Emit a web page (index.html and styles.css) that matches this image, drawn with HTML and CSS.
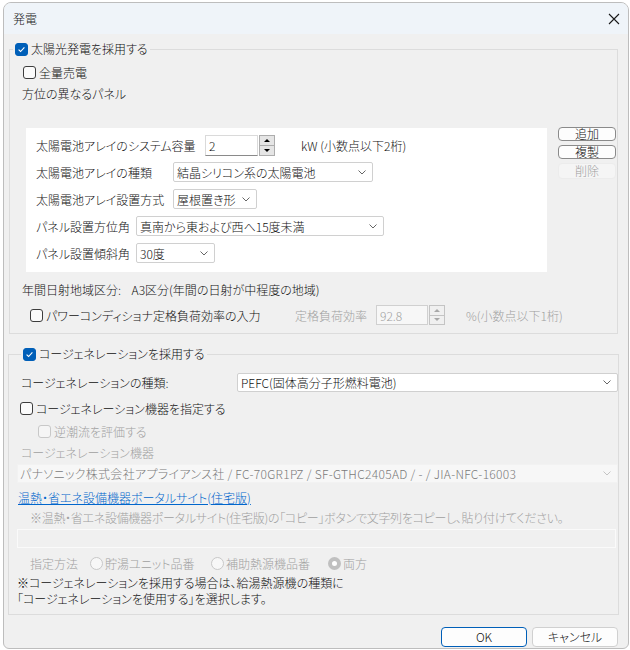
FILE: index.html
```html
<!DOCTYPE html>
<html lang="ja">
<head>
<meta charset="utf-8">
<title>発電</title>
<link rel="stylesheet" href="styles.css">
</head>
<body>
<div class="window">
  <div class="titlebar">
    <span class="title">発電</span>
    <svg class="close" width="12" height="12" viewBox="0 0 12 12"><path d="M1 1L11 11M11 1L1 11" stroke="#1a1a1a" stroke-width="1.1" fill="none"/></svg>
  </div>
  <div class="body">
    <fieldset class="group group1">
      <legend><span class="leg"><span class="cb on"><svg width="11" height="11" viewBox="0 0 11 11"><path d="M2.6 5.6L4.6 7.5L8.4 3.4" stroke="#fff" stroke-width="1.1" fill="none"/></svg></span>太陽光発電を採用する</span></legend>
      <div class="row pl13 mt5"><span class="cb"></span>全量売電</div>
      <div class="row pl12 mt1">方位の異なるパネル</div>
      <div class="panelrow">
        <div class="panel">
          <div class="prow"><span class="lab-a">太陽電池アレイのシステム容量</span><span class="num">2</span><span class="spin"><span class="sb"><i class="up"></i></span><span class="sb"><i class="dn"></i></span></span><span class="unit">kW (小数点以下2桁)</span></div>
          <div class="prow"><span class="lab-b">太陽電池アレイの種類</span><span class="combo w200"><span>結晶シリコン系の太陽電池</span><svg width="8" height="5" viewBox="0 0 8 5"><path d="M0.5 0.5L4 4L7.5 0.5" stroke="#666" fill="none"/></svg></span></div>
          <div class="prow"><span class="lab-b">太陽電池アレイ設置方式</span><span class="combo w84"><span>屋根置き形</span><svg width="8" height="5" viewBox="0 0 8 5"><path d="M0.5 0.5L4 4L7.5 0.5" stroke="#666" fill="none"/></svg></span></div>
          <div class="prow"><span class="lab-c">パネル設置方位角</span><span class="combo w248"><span>真南から東および西へ15度未満</span><svg width="8" height="5" viewBox="0 0 8 5"><path d="M0.5 0.5L4 4L7.5 0.5" stroke="#666" fill="none"/></svg></span></div>
          <div class="prow"><span class="lab-c">パネル設置傾斜角</span><span class="combo w79"><span>30度</span><svg width="8" height="5" viewBox="0 0 8 5"><path d="M0.5 0.5L4 4L7.5 0.5" stroke="#666" fill="none"/></svg></span></div>
        </div>
        <div class="sidebtns">
          <span class="sbtn h14">追加</span>
          <span class="sbtn h14">複製</span>
          <span class="sbtn dis h16">削除</span>
        </div>
      </div>
      <div class="row pl12 mt7">年間日射地域区分:&nbsp;&nbsp;&nbsp;&nbsp;A3区分(年間の日射が中程度の地域)</div>
      <div class="row pl20 mt5 h22">
        <span class="pclab"><span class="cb"></span>パワーコンディショナ定格負荷効率の入力</span>
        <span class="effl gray">定格負荷効率</span>
        <span class="num dis">92.8</span><span class="spin dis"><span class="sb"><i class="up"></i></span><span class="sb"><i class="dn"></i></span></span>
        <span class="unit2 gray">%(小数点以下1桁)</span>
      </div>
    </fieldset>

    <fieldset class="group group2">
      <legend><span class="leg"><span class="cb on"><svg width="11" height="11" viewBox="0 0 11 11"><path d="M2.6 5.6L4.6 7.5L8.4 3.4" stroke="#fff" stroke-width="1.1" fill="none"/></svg></span>コージェネレーションを採用する</span></legend>
      <div class="row pl12 mt10"><span class="cglab">コージェネレーションの種類:</span><span class="combo cgcombo"><span>PEFC(固体高分子形燃料電池)</span><svg width="8" height="5" viewBox="0 0 8 5"><path d="M0.5 0.5L4 4L7.5 0.5" stroke="#666" fill="none"/></svg></span></div>
      <div class="row pl11 mt6"><span class="cb"></span>コージェネレーション機器を指定する</div>
      <div class="row pl29 mt3"><span class="cb dis"></span><span class="gray">逆潮流を評価する</span></div>
      <div class="row pl12 mt1 gray">コージェネレーション機器</div>
      <div class="dcombo"><span>パナソニック株式会社アプライアンス社 / FC-70GR1PZ / SF-GTHC2405AD / - / JIA-NFC-16003</span><svg width="8" height="5" viewBox="0 0 8 5"><path d="M0.5 0.5L4 4L7.5 0.5" stroke="#c4c4c4" fill="none"/></svg></div>
      <div class="row pl9 mt4"><span class="link">温熱・省エネ設備機器ポータルサイト(住宅版)</span></div>
      <div class="row pl21 gray tight">※温熱・省エネ設備機器ポータルサイト(住宅版)の「コピー」ボタンで文字列をコピーし、貼り付けてください。</div>
      <div class="tbox"></div>
      <div class="row pl21 mt5 gray">
        <span class="methl">指定方法</span>
        <span class="ropt w121"><span class="rd"></span>貯湯ユニット品番</span>
        <span class="ropt w117"><span class="rd"></span>補助熱源機品番</span>
        <span class="ropt"><span class="rd on"></span>両方</span>
      </div>
      <div class="notes">※コージェネレーションを採用する場合は、給湯熱源機の種類に<br>「コージェネレーションを使用する」を選択します。</div>
    </fieldset>

    <div class="footer">
      <span class="btn def">OK</span>
      <span class="btn">キャンセル</span>
    </div>
  </div>
</div>
</body>
</html>
```

FILE: styles.css
```css
* { box-sizing: border-box; }
html, body { margin: 0; background: #ffffff; }
body {
  font-family: "Noto Sans CJK JP", "Noto Sans", sans-serif;
  font-size: 12px;
  font-weight: 300;
  color: #111;
  font-feature-settings: "palt";
}
.window {
  margin: 2px 0 0 3px;
  width: 626px;
  height: 647px;
  border: 1px solid #bdbdbd;
  border-radius: 8px 8px 6px 6px;
  background: #f0f0f0;
  overflow: hidden;
  display: flex;
  flex-direction: column;
}
.titlebar {
  height: 31px;
  flex: none;
  background: #eff4f9;
  display: flex;
  align-items: center;
  justify-content: space-between;
  padding: 0 8px 0 9px;
}
.title { font-size: 12px; color: #1a1a1a; }
.body { padding-top: 7px; }

.group {
  margin: 0;
  padding: 0;
  border: 1px solid #dcdcdc;
  min-width: 0;
}
legend { padding: 0 2px; height: 16px; }
.leg { display: flex; align-items: center; height: 16px; line-height: 16px; }
.group1 { margin-left: 5px; width: 609px; padding-bottom: 7px; }
.group1 legend { margin-left: 3px; }
.group2 { margin: 12px 0 0 4px; width: 611px; padding-bottom: 7px; }
.group2 legend { margin-left: 12px; }

.row { display: flex; align-items: center; height: 20px; white-space: nowrap; }
.h22 { height: 22px; }
.pl9 { padding-left: 9px; }
.pl11 { padding-left: 11px; }
.pl12 { padding-left: 12px; }
.pl13 { padding-left: 13px; }
.pl20 { padding-left: 20px; }
.pl21 { padding-left: 21px; }
.pl29 { padding-left: 29px; }
.mt1 { margin-top: 1px; }
.mt3 { margin-top: 3px; }
.mt4 { margin-top: 4px; }
.mt5 { margin-top: 5px; }
.mt6 { margin-top: 6px; }
.mt7 { margin-top: 7px; }
.mt10 { margin-top: 10px; }
.gray { color: #a0a0a0; }
.tight { letter-spacing: -0.3px; }

.cb {
  width: 13px; height: 13px; flex: none;
  border: 1px solid #3d3d3d;
  border-radius: 3px;
  background: #fbfbfb;
  margin-right: 3px;
  display: inline-flex; align-items: center; justify-content: center;
}
.cb.on { background: #005fb8; border-color: #005fb8; }
.cb.dis { border-color: #c8c8c8; background: #f5f5f5; }

.panelrow { display: flex; margin-top: 24px; height: 145px; }
.panel {
  margin: 1px 0 0 16px;
  width: 521px; height: 144px;
  background: #fff;
  padding: 6px 0 0 10px;
  display: flex; flex-direction: column; gap: 5px;
}
.prow { display: flex; align-items: center; height: 22px; white-space: nowrap; }
.lab-a { width: 169px; flex: none; }
.lab-b { width: 137px; flex: none; }
.lab-c { width: 100px; flex: none; }
.num {
  width: 53px; height: 21px; flex: none;
  border: 1px solid #dadada; border-bottom-color: #8a8a8a;
  background: #fff;
  padding: 0 0 0 3px;
  line-height: 19px;
}
.spin { width: 16px; height: 21px; flex: none; display: flex; flex-direction: column; margin-left: 1px; }
.sb {
  flex: 1; border: 1px solid #adadad; background: #e5e5e5;
  display: flex; align-items: center; justify-content: center;
}
.sb + .sb { border-top: none; }
.up { width: 0; height: 0; border-left: 3px solid transparent; border-right: 3px solid transparent; border-bottom: 3px solid #000; }
.dn { width: 0; height: 0; border-left: 3px solid transparent; border-right: 3px solid transparent; border-top: 3px solid #000; }
.spin.dis .sb { background: #f0f0f0; border-color: #c4c4c4; }
.spin.dis .up { border-bottom-color: #a8a8a8; }
.spin.dis .dn { border-top-color: #a8a8a8; }
.num.dis { background: #f7f7f7; border-color: #d0d0d0; color: #a0a0a0; width: 52px; height: 20px; }
.spin.dis { height: 20px; }
.unit { margin-left: 26px; }

.combo {
  height: 20px; flex: none;
  border: 1px solid #d0d0d0;
  border-radius: 2px;
  background: #fff;
  display: flex; align-items: center; justify-content: space-between;
  padding: 0 6px 0 3px;
  overflow: hidden;
}
.w200 { width: 200px; }
.w84 { width: 84px; }
.w248 { width: 248px; }
.w79 { width: 79px; }

.sidebtns { display: flex; flex-direction: column; gap: 4px; margin-left: 11px; width: 58px; }
.sbtn {
  display: block;
  border: 1px solid #8a8a8a; border-radius: 4px;
  background: #fdfdfd;
  text-align: center; font-size: 12px; line-height: 12px;
}
.sbtn.h14 { height: 14px; }
.sbtn.h16 { height: 16px; line-height: 14px; }
.sbtn.dis { border-color: #ececec; background: #f5f5f5; color: #a0a0a0; }

.pclab { width: 265px; flex: none; display: flex; align-items: center; }
.effl { width: 81px; flex: none; }
.unit2 { margin-left: 21px; }

.cglab { width: 216px; flex: none; }
.cgcombo { width: 381px; height: 19px; }
.dcombo {
  margin: 2px 0 0 8px;
  width: 601px; height: 19px;
  background: #f7f7f7;
  border: 1px solid #f2f2f2;
  display: flex; align-items: center; justify-content: space-between;
  padding: 0 6px 0 2px;
  color: #7a7a7a;
  white-space: nowrap;
  letter-spacing: 0.3px;
}
.link { color: #0066cc; text-decoration: underline; }
.tbox {
  margin: 2px 0 0 8px;
  width: 599px; height: 19px;
  border: 1px solid #fafafa;
  background: #f0f0f0;
}
.methl { width: 60px; flex: none; }
.ropt { display: flex; align-items: center; flex: none; }
.w121 { width: 121px; }
.w117 { width: 117px; }
.rd {
  width: 13px; height: 13px; flex: none;
  border: 1px solid #c8c8c8; border-radius: 50%;
  background: #f7f7f7;
  margin-right: 2px;
}
.rd.on { border: 4px solid #c0c0c0; background: #fff; }
.notes { margin-top: 2px; padding-left: 8px; line-height: 16px; }

.footer { display: flex; justify-content: flex-end; gap: 5px; padding-right: 10px; margin-top: 12px; }
.btn {
  width: 86px; height: 20px;
  border: 1px solid #d0d0d0; border-radius: 4px;
  background: #fdfdfd;
  text-align: center; line-height: 18px;
}
.btn.def { border-color: #005fb8; }
```
